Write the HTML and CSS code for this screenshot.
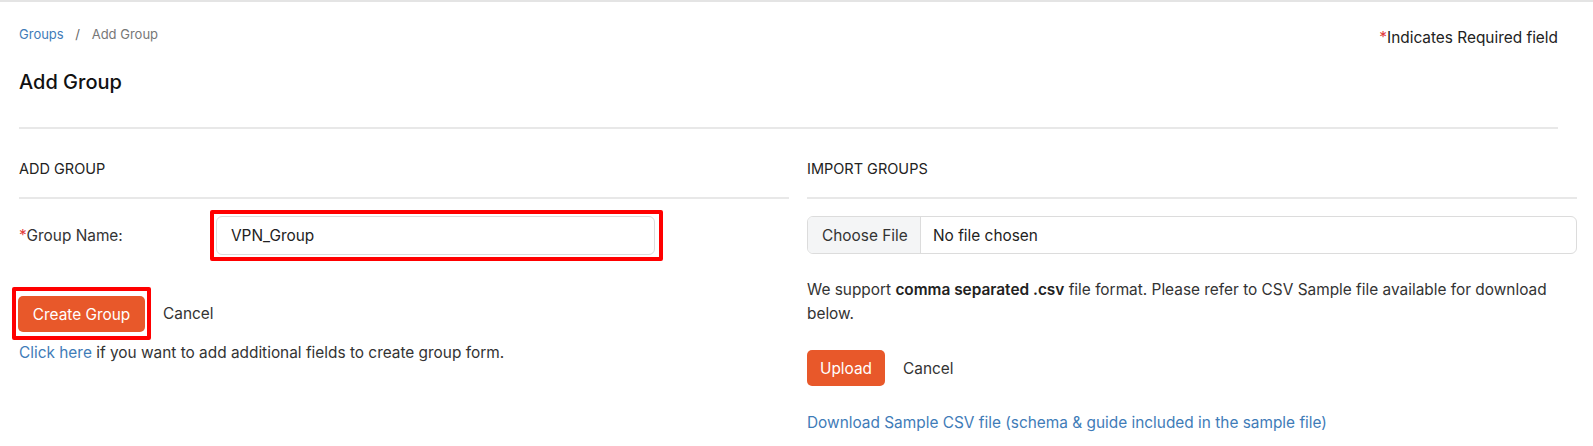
FILE: index.html
```html
<!DOCTYPE html>
<html lang="en">
<head>
    <meta charset="UTF-8">
    <meta name="viewport" content="width=device-width, initial-scale=1.0">
    <title>Add Group</title>
    <link rel="stylesheet" href="styles.css">
</head>
<body>
    <div class="page">
        <div class="header">
            <div class="breadcrumb">
                <a href="#" class="link">Groups</a>
                <span class="sep">/</span>
                <span>Add Group</span>
            </div>
            <div class="required-note"><span class="star">*</span>Indicates Required field</div>
        </div>
        <h1 class="title">Add Group</h1>
        <hr class="divider">

        <div class="columns">
            <div class="section">
                <h2 class="section-title">ADD GROUP</h2>
                <hr class="divider section-divider">
                <div class="form-row">
                    <label class="form-label"><span class="star">*</span>Group Name:</label>
                    <div class="highlight field-highlight">
                        <input class="text-input" type="text" value="VPN_Group">
                    </div>
                </div>
                <div class="actions">
                    <div class="highlight button-highlight">
                        <button class="btn-primary btn-create">Create Group</button>
                    </div>
                    <a href="#" class="cancel">Cancel</a>
                </div>
                <p class="hint"><a href="#" class="link">Click here</a> if you want to add additional fields to create group form.</p>
            </div>

            <div class="section">
                <h2 class="section-title">IMPORT GROUPS</h2>
                <hr class="divider section-divider">
                <div class="file-input">
                    <span class="file-button">Choose File</span>
                    <span class="file-name">No file chosen</span>
                </div>
                <p class="info">We support <strong>comma separated .csv</strong> file format. Please refer to CSV Sample file available for download below.</p>
                <div class="actions upload-actions">
                    <button class="btn-primary btn-upload">Upload</button>
                    <a href="#" class="cancel">Cancel</a>
                </div>
                <a href="#" class="link download">Download Sample CSV file (schema &amp; guide included in the sample file)</a>
            </div>
        </div>
    </div>
</body>
</html>
```

FILE: styles.css
```css
body {
    margin: 0;
    background-color: #fff;
    color: #333;
    font-family: Inter, "Noto Sans", sans-serif;
    font-size: 15.4px;
}
.page {
    border-top: 2px solid #e4e4e4;
    padding: 0 16px 0 19px;
}
.header {
    width: 1539px;
    display: flex;
    justify-content: space-between;
    align-items: flex-start;
    padding-top: 23px;
}
.breadcrumb {
    font-size: 13px;
    line-height: 19px;
    color: #777;
}
.breadcrumb .sep {
    margin: 0 8px;
    color: #666;
}
.link {
    color: #3f7cb8;
    text-decoration: none;
}
.star {
    color: #e23a3a;
}
.required-note {
    margin-top: 2px;
    line-height: 22px;
    color: #222;
}
.title {
    margin: 20px 0 0;
    font-size: 20px;
    line-height: 26px;
    font-weight: 500;
    color: #111;
}
.divider {
    margin: 32px 0 0;
    width: 1539px;
    height: 2px;
    border: none;
    background-color: #e8e8e8;
}
.columns {
    display: grid;
    grid-template-columns: 770px 770px;
    gap: 18px;
}
.section-title {
    margin: 30px 0 0;
    font-size: 14.5px;
    line-height: 20px;
    font-weight: 400;
    color: #222;
}
.section-divider {
    width: 100%;
    margin-top: 18px;
}
.form-row {
    display: flex;
    align-items: center;
    margin-top: 11px;
}
.form-label {
    width: 191px;
    color: #333;
}
.highlight {
    border: 4px solid #f00;
    border-radius: 2px;
    background-color: #fff;
}
.field-highlight {
    padding: 2px 4px 2px 2px;
}
.text-input {
    display: block;
    box-sizing: border-box;
    width: 439px;
    height: 39px;
    padding: 0 14px;
    border: 1px solid #dcdcdc;
    border-radius: 6px;
    font-family: inherit;
    font-size: 15.4px;
    color: #222;
    outline: none;
}
.actions {
    display: flex;
    align-items: center;
    margin-top: 26px;
}
.button-highlight {
    margin-left: -7px;
    padding: 5px 2px 4px 2px;
}
.btn-primary {
    height: 36px;
    padding: 0;
    border: none;
    border-radius: 5px;
    background-color: #e8582a;
    color: #fff;
    font-family: inherit;
    font-size: 15.4px;
    white-space: nowrap;
    cursor: pointer;
}
.btn-create {
    width: 127px;
}
.cancel {
    margin-left: 12px;
    color: #333;
    text-decoration: none;
}
.hint {
    margin: 2px 0 0;
    line-height: 22px;
}
.file-input {
    display: flex;
    align-items: stretch;
    box-sizing: border-box;
    height: 38px;
    margin-top: 17px;
    border: 1px solid #dcdcdc;
    border-radius: 6px;
    overflow: hidden;
}
.file-button {
    display: flex;
    align-items: center;
    width: 113px;
    box-sizing: border-box;
    padding-left: 14px;
    background-color: #f4f5f6;
    border-right: 1px solid #dcdcdc;
    color: #333;
}
.file-name {
    display: flex;
    align-items: center;
    padding-left: 12px;
    color: #222;
}
.info {
    margin: 24px 0 0;
    line-height: 24px;
    color: #333;
}
.info strong {
    font-weight: 600;
    color: #222;
}
.upload-actions {
    margin-top: 24px;
}
.btn-upload {
    width: 78px;
}
.upload-actions .cancel {
    margin-left: 18px;
}
.download {
    display: block;
    margin-top: 26px;
    line-height: 22px;
}
```
